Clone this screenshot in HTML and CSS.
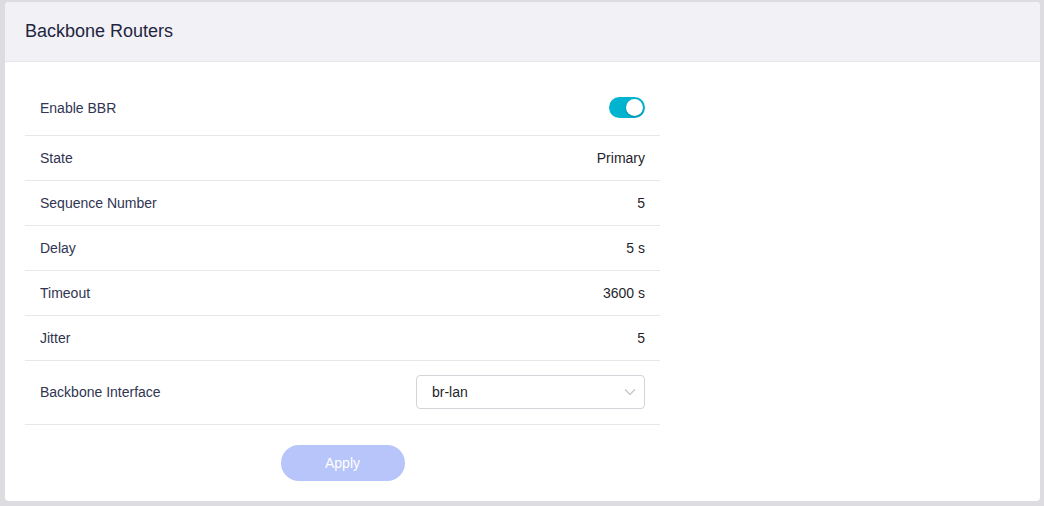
FILE: index.html
```html
<!DOCTYPE html>
<html>
<head>
<meta charset="utf-8">
<link rel="stylesheet" href="styles.css">
</head>
<body>
<div class="card">
  <div class="card-header">Backbone Routers</div>
  <div class="card-body">
    <div class="form">
      <div class="row row-first">
        <span class="label">Enable BBR</span>
        <span class="toggle"><span class="knob"></span></span>
      </div>
      <div class="row"><span class="label">State</span><span class="value">Primary</span></div>
      <div class="row"><span class="label">Sequence Number</span><span class="value">5</span></div>
      <div class="row"><span class="label">Delay</span><span class="value">5 s</span></div>
      <div class="row"><span class="label">Timeout</span><span class="value">3600 s</span></div>
      <div class="row"><span class="label">Jitter</span><span class="value">5</span></div>
      <div class="row row-select">
        <span class="label">Backbone Interface</span>
        <div class="select">
          <span>br-lan</span>
          <svg class="chev" width="12" height="8" viewBox="0 0 12 8"><path d="M1 1.5 L6 6.5 L11 1.5" fill="none" stroke="#c0c0c8" stroke-width="1.1"/></svg>
        </div>
      </div>
      <div class="actions"><button class="apply">Apply</button></div>
    </div>
  </div>
</div>
</body>
</html>
```
FILE: styles.css
```css
html, body { margin: 0; padding: 0; }
body {
  background: #dcdce1;
  font-family: "Liberation Sans", Arial, sans-serif;
  width: 1044px;
  height: 506px;
  overflow: hidden;
  padding: 2px 4px 0 5px;
  box-sizing: border-box;
}
.card {
  background: #fff;
  border-radius: 4px;
  height: 499px;
  overflow: hidden;
  display: flex;
  flex-direction: column;
}
.card-header {
  background: #f2f1f6;
  height: 60px;
  border-bottom: 1px solid #e6e6ec;
  box-sizing: border-box;
  padding: 0 20px;
  display: flex;
  align-items: center;
  font-size: 18px;
  color: #1f2540;
}
.card-body {
  padding: 18px 20px 20px 20px;
}
.form { width: 635px; }
.row {
  display: flex;
  align-items: center;
  justify-content: space-between;
  height: 45px;
  border-bottom: 1px solid #e8e8ec;
  box-sizing: border-box;
  padding: 0 15px;
  font-size: 14px;
  color: #2b2f45;
}
.row-first { height: 56px; padding-top: 0; }
.row-select { height: 64px; padding-bottom: 2px; }
.label { color: #303552; }
.value { color: #1f1f2a; }
.toggle {
  width: 36px;
  height: 21px;
  border-radius: 11px;
  background: #00b3cf;
  position: relative;
}
.knob {
  position: absolute;
  right: 2px;
  top: 2px;
  width: 17px;
  height: 17px;
  border-radius: 50%;
  background: #fff;
  box-shadow: 0 1px 2px rgba(0,0,0,0.25);
}
.select {
  width: 229px;
  height: 34px;
  border: 1px solid #d4d4da;
  border-radius: 4px;
  box-sizing: border-box;
  display: flex;
  align-items: center;
  justify-content: space-between;
  padding: 0 8px 0 15px;
  color: #1f1f2a;
}
.actions {
  display: flex;
  justify-content: center;
  padding-top: 20px;
}
.apply {
  width: 124px;
  height: 36px;
  border: none;
  border-radius: 18px;
  background: #b8c5fa;
  color: #fff;
  font-family: "Liberation Sans", Arial, sans-serif;
  font-size: 14px;
}
```
